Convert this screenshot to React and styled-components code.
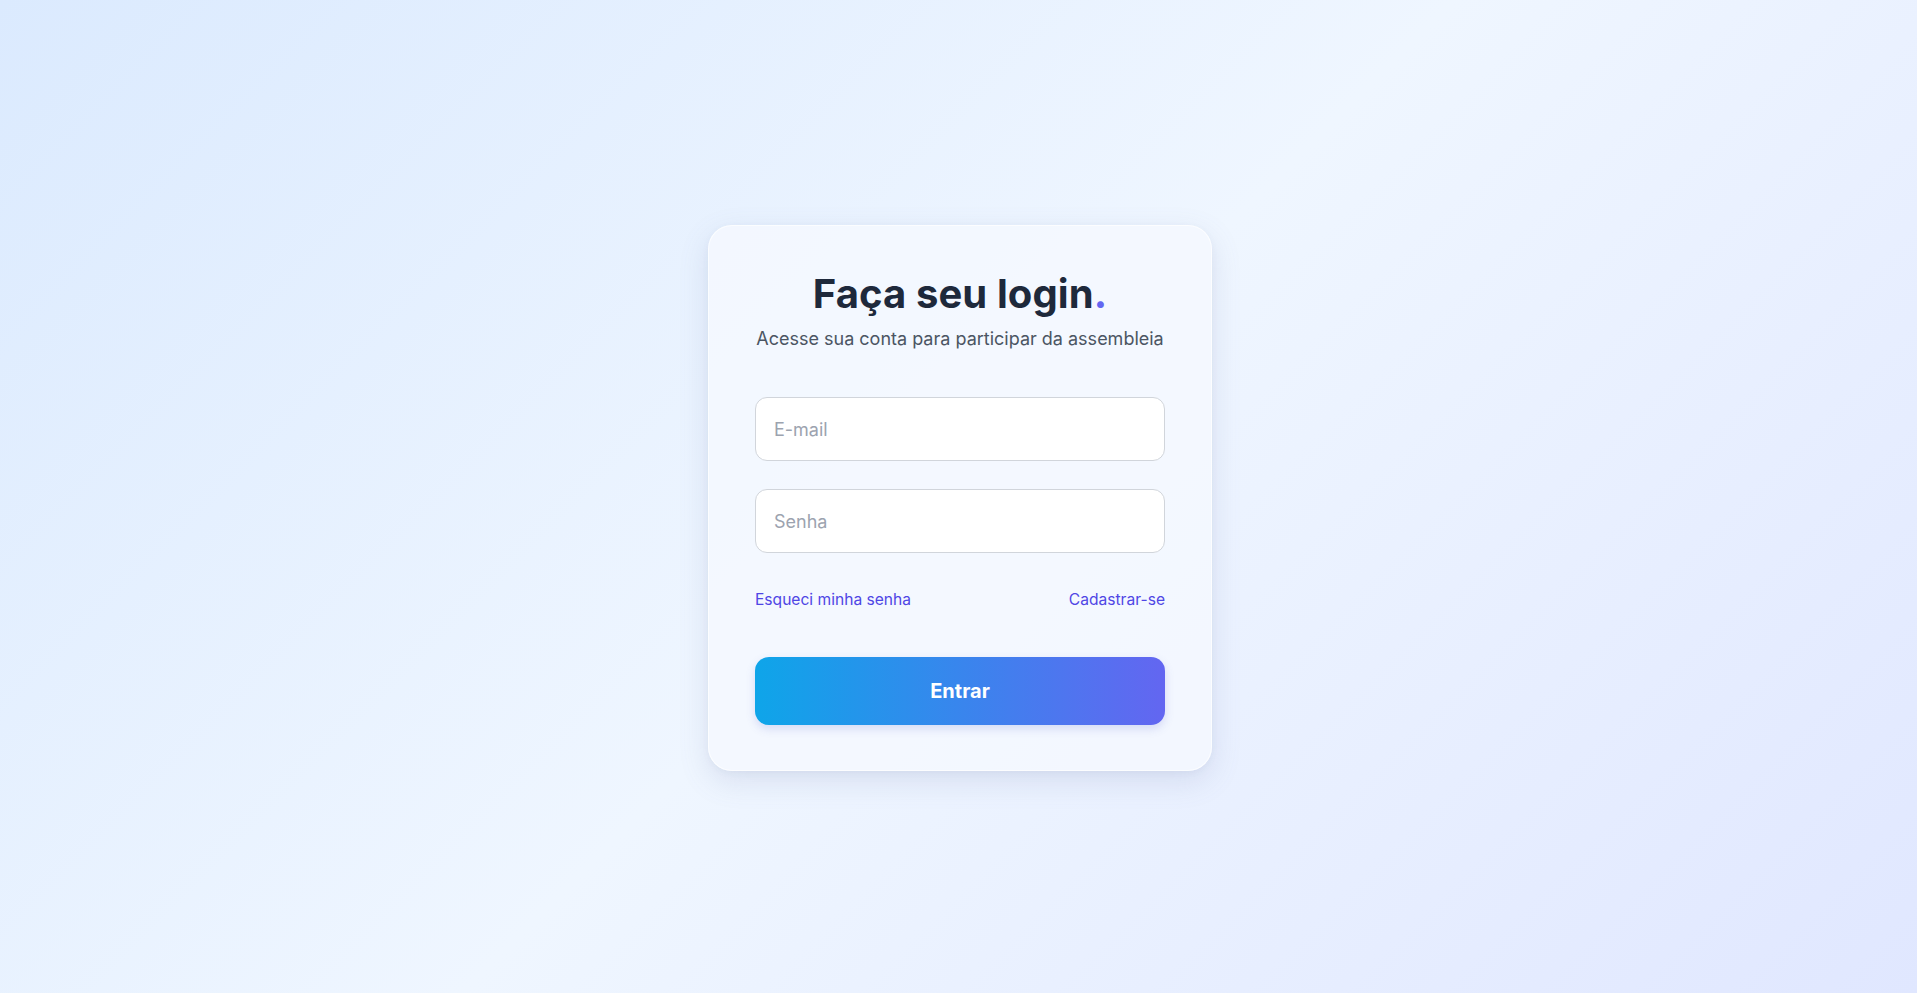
import React from "react";
import styled, { createGlobalStyle } from "styled-components";

const GlobalStyle = createGlobalStyle`
  * { box-sizing: border-box; }
  html, body { margin: 0; padding: 0; height: 100%; }
  body {
    font-family: Inter, "Noto Sans", "Liberation Sans", sans-serif;
    -webkit-font-smoothing: antialiased;
  }
  #root { min-height: 100vh; }
`;

const Page = styled.main`
  min-height: 100vh;
  padding: 3px 0 0 3px;
  display: flex;
  align-items: center;
  justify-content: center;
  background: linear-gradient(135deg, #dbeafe 0%, #eff6ff 50%, #e0e7ff 100%);
`;

const Card = styled.form`
  width: 504px;
  padding: 44px 46px 45px;
  border-radius: 24px;
  background: rgba(244, 248, 255, 0.85);
  border: 1px solid rgba(255, 255, 255, 0.7);
  box-shadow: 0 10px 30px rgba(99, 115, 160, 0.16), 0 2px 6px rgba(99, 115, 160, 0.06);
  display: flex;
  flex-direction: column;
`;

const Header = styled.header`
  display: flex;
  flex-direction: column;
  align-items: center;
  gap: 7px;
  margin-bottom: 45px;
`;

const Title = styled.h1`
  margin: 0;
  font-size: 40px;
  line-height: 48px;
  font-weight: 700;
  color: #1e293b;
  letter-spacing: 0.1px;
`;

const Dot = styled.span`
  color: #6366f1;
`;

const Subtitle = styled.p`
  margin: 0;
  font-size: 18px;
  line-height: 27px;
  color: #4b5563;
`;

const Fields = styled.div`
  display: flex;
  flex-direction: column;
  gap: 28px;
`;

const Input = styled.input`
  width: 100%;
  height: 64px;
  padding: 0 18px;
  border: 1px solid #d1d5db;
  border-radius: 12px;
  background: #ffffff;
  font-family: inherit;
  font-size: 18px;
  color: #1f2937;
  outline: none;
  &::placeholder { color: #9ca3af; }
`;

const Links = styled.div`
  display: flex;
  justify-content: space-between;
  align-items: center;
  margin-top: 35px;
  margin-bottom: 45px;
`;

const LinkText = styled.a`
  font-size: 15.6px;
  line-height: 24px;
  color: #4f46e5;
  text-decoration: none;
  cursor: pointer;
`;

const Button = styled.button`
  width: 100%;
  height: 68px;
  border: none;
  border-radius: 14px;
  background: linear-gradient(90deg, #0ea5e9 0%, #6366f1 100%);
  color: #ffffff;
  font-family: inherit;
  font-size: 20px;
  font-weight: 700;
  cursor: pointer;
  box-shadow: 0 4px 10px rgba(79, 90, 200, 0.18);
`;

export default function App() {
  return (
    <>
      <GlobalStyle />
      <Page>
        <Card onSubmit={(e) => e.preventDefault()}>
          <Header>
            <Title>
              Faça seu login<Dot>.</Dot>
            </Title>
            <Subtitle>Acesse sua conta para participar da assembleia</Subtitle>
          </Header>
          <Fields>
            <Input type="email" placeholder="E-mail" />
            <Input type="password" placeholder="Senha" />
          </Fields>
          <Links>
            <LinkText>Esqueci minha senha</LinkText>
            <LinkText>Cadastrar-se</LinkText>
          </Links>
          <Button type="submit">Entrar</Button>
        </Card>
      </Page>
    </>
  );
}
